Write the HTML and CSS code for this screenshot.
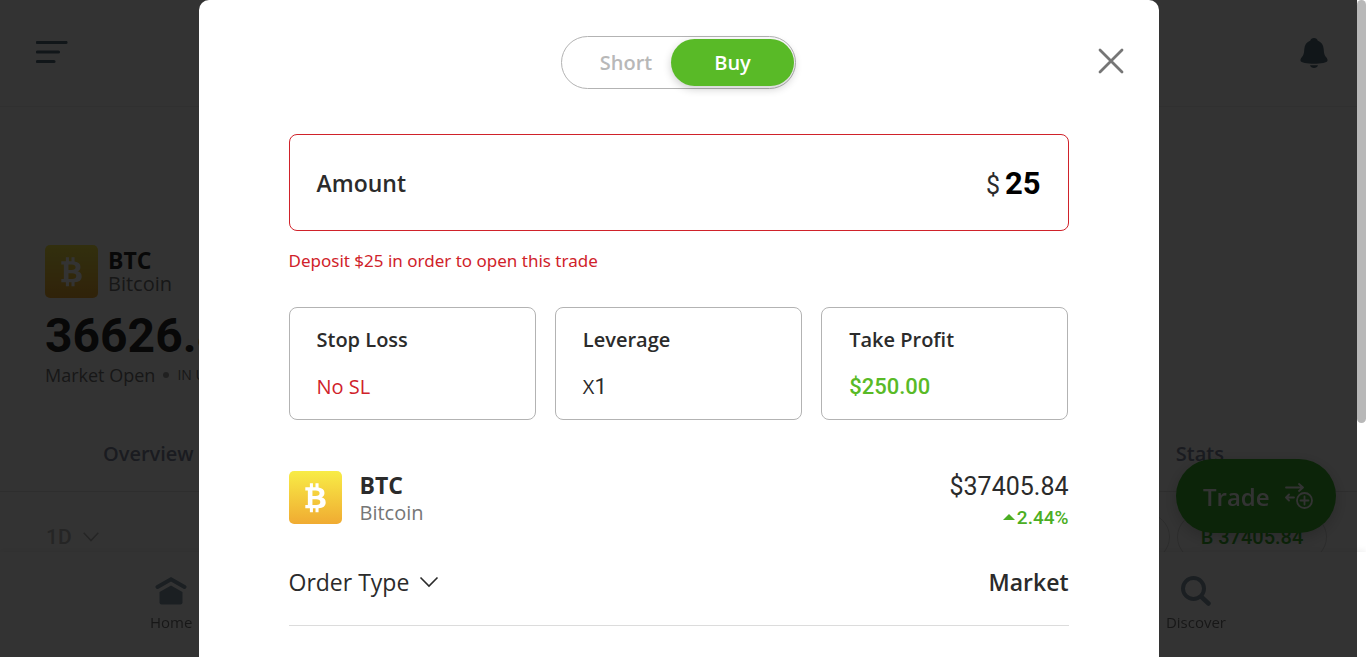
FILE: index.html
```html
<!DOCTYPE html>
<html lang="en">
<head>
<meta charset="utf-8">
<meta name="viewport" content="width=device-width, initial-scale=1">
<title>BTC - Trade</title>
<link rel="stylesheet" href="styles.css">
</head>
<body>

<div class="page">
	<header class="topbar">
		<button class="icon-btn" type="button" aria-label="Menu">
			<svg width="32" height="24" viewBox="0 0 32 24" fill="none" stroke="#556e7d" stroke-width="3.2" stroke-linecap="round"><path d="M1.500 1.500h28.500M1.500 11h21M1.500 20.500h16.500"/></svg>
		</button>
		<button class="icon-btn" type="button" aria-label="Notifications">
			<svg width="28" height="32" viewBox="0 0 28 32" fill="#556e7d"><path d="M14 1c2 0 3.400 1.200 3.600 2.600 3.900 1.500 5.800 4.600 6.100 8.500.3 4.500.8 6.200 2.500 8.100 1 1.200 1.500 2.200 1.300 3.500C27.200 25.700 21 26.700 14 26.700S.8 25.700.5 23.700c-.2-1.300.3-2.300 1.300-3.500 1.700-1.900 2.200-3.600 2.500-8.100.3-3.900 2.200-7 6.100-8.500C10.600 2.200 12 1 14 1z"/><path d="M10 28.300h8c-.5 1.900-2 2.700-4 2.700s-3.500-.8-4-2.700z"/></svg>
		</button>
	</header>

	<section class="instrument">
		<div class="instrument-head">
			<svg class="coin" viewBox="0 0 52 52"><use href="#btc"/></svg>
			<div>
				<div class="symbol">BTC</div>
				<div class="fullname">Bitcoin</div>
			</div>
		</div>
		<div class="price">36626.84</div>
		<div class="market-state">Market Open <i class="dot"></i> <small>IN USD</small></div>
	</section>

	<nav class="tabs">
		<a href="#">Overview</a>
		<a href="#">Stats</a>
	</nav>

	<div class="chart-bar">
		<button class="period" type="button">1D
			<svg width="16" height="10" viewBox="0 0 16 10" fill="none" stroke="currentColor" stroke-width="1.6"><path d="M.7.7 8 8.500 15.300.7"/></svg>
		</button>
		<div class="quotes">
			<span class="quote sell">S 36626.84</span>
			<span class="quote buy">B 37405.84</span>
		</div>
	</div>

	<nav class="bottom-nav">
		<a href="#">
			<svg width="32" height="30" viewBox="0 0 32 30"><path d="M2.500 11 16 3.200 29.500 11" fill="none" stroke="#879baa" stroke-width="4" stroke-linecap="round"/><path d="M16 9.500 27.500 16v10.500a2 2 0 0 1-2 2h-19a2 2 0 0 1-2-2V16z" fill="#879baa"/></svg>
			Home
		</a>
		<a href="#">
			<svg width="32" height="30" viewBox="0 0 32 30" fill="none" stroke="#879baa" stroke-linecap="round"><circle cx="13.500" cy="12.500" r="10.500" stroke-width="4"/><path d="m21.500 21 7 6.500" stroke-width="4.500"/></svg>
			Discover
		</a>
	</nav>

	<button class="trade-btn" type="button">Trade
		<svg width="28" height="26" viewBox="0 0 28 26" fill="none" stroke="#fff" stroke-width="1.800" stroke-linecap="round" stroke-linejoin="round"><path d="M1 4.500h16M14 1l4 3.500L14 8M9 14.500H1M4 11.500l-3 3 3 3"/><circle cx="19.500" cy="17.500" r="7.500"/><path d="M19.500 13.500v8M15.500 17.500h8"/></svg>
	</button>
</div>

<div class="overlay">
	<form class="modal">
		<button class="close" type="button" aria-label="Close">
			<svg width="26" height="26" viewBox="0 0 26 26" fill="none" stroke="#767676" stroke-width="2.800" stroke-linecap="round"><path d="m2 2 22 22M24 2 2 24"/></svg>
		</button>

		<div class="side-switch">
			<button class="side" type="button">Short</button>
			<button class="side side-active" type="button">Buy</button>
		</div>

		<div class="amount-box">
			<label for="amount">Amount</label>
			<div class="amount-value">
				<span>$</span>
				<input id="amount" type="text" inputmode="numeric" value="25">
			</div>
		</div>
		<p class="error">Deposit $25 in order to open this trade</p>

		<div class="params">
			<button class="param" type="button">
				<span class="param-name">Stop Loss</span>
				<span class="param-value red">No SL</span>
			</button>
			<button class="param" type="button">
				<span class="param-name">Leverage</span>
				<span class="param-value">X<span class="num">1</span></span>
			</button>
			<button class="param" type="button">
				<span class="param-name">Take Profit</span>
				<span class="param-value green">$250.00</span>
			</button>
		</div>

		<div class="asset">
			<svg class="coin" viewBox="0 0 52 52">
				<defs>
					<linearGradient id="gold" x1="0" y1="0" x2="0" y2="1">
						<stop offset="0" stop-color="#f8ec46"/>
						<stop offset="1" stop-color="#f0ab32"/>
					</linearGradient>
					<g id="btc">
						<rect width="52" height="52" rx="5" fill="url(#gold)"/>
						<path fill="#fff" fill-rule="evenodd" d="M16 16h4.500v-4h3v4h2.500v-4h3v4.300c3.700.5 5.800 2.300 5.800 5.200 0 2-1 3.500-2.900 4.300 2.600.7 4.100 2.400 4.100 5 0 3.500-2.500 5.400-7 5.700v4h-3v-4h-2.500v4h-3v-4H16v-3.200h2.500V19.200H16zM23 19.200v5.400h3.200c2.500 0 3.800-.9 3.800-2.700s-1.300-2.700-3.800-2.700zM23 27.700v5.600h3.700c2.700 0 4-.9 4-2.800s-1.300-2.800-4-2.800z"/>
					</g>
				</defs>
				<use href="#btc"/>
			</svg>
			<div class="asset-name">
				<div class="symbol">BTC</div>
				<div class="fullname">Bitcoin</div>
			</div>
			<div class="asset-rate">
				<div class="rate">$37405.84</div>
				<div class="change"><i class="up"></i>2.44%</div>
			</div>
		</div>

		<div class="order-type">
			<button class="order-btn" type="button">Order Type
				<svg width="20" height="12" viewBox="0 0 20 12" fill="none" stroke="currentColor" stroke-width="1.600"><path d="M1.500 1.500 10 10l8.500-8.500"/></svg>
			</button>
			<strong>Market</strong>
		</div>
	</form>
</div>

<div class="scroll-thumb"></div>

</body>
</html>
```
FILE: styles.css
```css
* {
	box-sizing: border-box;
}
body {
	margin: 0;
	background: #fff;
	color: #2b2b2b;
	font-family: "Open Sans", "Noto Sans", sans-serif;
	overflow: hidden;
}
button {
	padding: 0;
	border: 0;
	background: none;
	color: inherit;
	font: inherit;
	cursor: pointer;
}
a {
	color: inherit;
	text-decoration: none;
}
svg {
	display: block;
	flex: none;
}
.coin {
	width: 53px;
	height: 53px;
}
.symbol {
	font-size: 23px;
	font-weight: 700;
}
.fullname {
	color: #767676;
	font-size: 20px;
}

/* page behind the dialog */
.page {
	padding-right: 9px;
}
.topbar {
	display: flex;
	justify-content: space-between;
	align-items: center;
	height: 107px;
	padding: 0 29px 0 36px;
	border-bottom: 1px solid #f0f0f0;
}
.instrument {
	padding: 138px 45px 0;
}
.instrument-head {
	display: flex;
	gap: 10px;
	line-height: 24px;
}
.instrument-head .symbol {
	margin-top: 3px;
}
.price {
	margin-top: 10px;
	font-family: Roboto, sans-serif;
	font-size: 48px;
	font-weight: 700;
	line-height: 56px;
}
.market-state {
	display: flex;
	align-items: center;
	gap: 8px;
	color: #767676;
	font-size: 18px;
	line-height: 22px;
}
.market-state small {
	font-size: 14px;
}
.dot {
	width: 6px;
	height: 6px;
	border-radius: 50%;
	background: #a0a0a0;
}
.tabs {
	display: flex;
	justify-content: space-between;
	margin-top: 30px;
	padding: 24px 133px 23px 103px;
	border-bottom: 1px solid #e4e4e4;
	color: #8289a0;
	font-size: 20px;
	font-weight: 600;
	line-height: 28px;
}
.chart-bar {
	display: flex;
	justify-content: space-between;
	align-items: center;
	padding: 21px 30px 0 46px;
}
.period {
	display: flex;
	align-items: center;
	gap: 11px;
	color: #b8b8b8;
	font-family: Roboto, sans-serif;
	font-size: 21px;
	font-weight: 500;
}
.quotes {
	display: flex;
	gap: 7px;
}
.quote {
	width: 150px;
	border: 1px solid #dcdcdc;
	border-radius: 24px;
	font-family: Roboto, sans-serif;
	font-size: 20px;
	font-weight: 500;
	line-height: 46px;
	text-align: center;
}
.sell {
	color: #d0222a;
}
.buy {
	color: #3cb42d;
}
.bottom-nav {
	position: fixed;
	right: 0;
	bottom: 0;
	left: 0;
	display: flex;
	justify-content: space-between;
	padding: 24px 140px 24px 150px;
	background: #fff;
	box-shadow: 0 -2px 6px rgba(0, 0, 0, 0.06);
	color: #767676;
	font-size: 15px;
	line-height: 22px;
}
.bottom-nav a {
	display: flex;
	flex-direction: column;
	align-items: center;
	gap: 5px;
}
.trade-btn {
	position: fixed;
	right: 30px;
	bottom: 124px;
	display: flex;
	align-items: center;
	gap: 15px;
	width: 160px;
	height: 74px;
	padding-left: 27px;
	border-radius: 37px;
	background: #3cb42d;
	box-shadow: 0 4px 16px rgba(0, 0, 0, 0.2);
	color: #fff;
	font-size: 24px;
	font-weight: 600;
}

/* dialog */
.overlay {
	position: fixed;
	top: 0;
	right: 9px;
	bottom: 0;
	left: 0;
	overflow: hidden;
	background: rgba(0, 0, 0, 0.8);
}
.modal {
	position: relative;
	max-width: 960px;
	min-height: 100%;
	margin: 0 auto;
	padding: 36px 90px;
	border-radius: 10px 10px 0 0;
	background: #fff;
}
.close {
	position: absolute;
	top: 48px;
	right: 35px;
}
.side-switch {
	display: flex;
	width: 235px;
	margin: 0 auto;
	padding: 2px 1px;
	border: 1px solid #b3b3b3;
	border-radius: 27px;
	font-size: 20px;
	font-weight: 600;
	line-height: 47px;
}
.side {
	flex: 1;
	padding-left: 18px;
	color: #b8b8b8;
}
.side-active {
	flex: none;
	width: 123px;
	padding: 0;
	border-radius: 24px;
	background: #59ba27;
	box-shadow: 0 3px 8px rgba(0, 0, 0, 0.2);
	color: #fff;
}
.amount-box {
	display: flex;
	justify-content: space-between;
	align-items: center;
	height: 97px;
	margin-top: 45px;
	padding: 0 27px;
	border: 1px solid #d0222a;
	border-radius: 8px;
	font-size: 23px;
	font-weight: 600;
}
.amount-value {
	display: flex;
	align-items: baseline;
	gap: 5px;
	font-family: Roboto, sans-serif;
	font-size: 25px;
	font-weight: 400;
}
.amount-value input {
	width: 2ch;
	padding: 2px 0 0;
	border: 0;
	outline: 0;
	background: none;
	color: #000;
	font-family: inherit;
	font-size: 31px;
	font-weight: 700;
	text-align: right;
}
.error {
	margin: 18px 0 0;
	color: #d0222a;
	font-family: "Noto Sans", sans-serif;
	font-size: 17px;
	line-height: 24px;
}
.params {
	display: grid;
	grid-template-columns: repeat(3, 1fr);
	gap: 19px;
	margin-top: 34px;
}
.param {
	display: flex;
	flex-direction: column;
	gap: 19px;
	padding: 18px 27px;
	border: 1px solid #b3b3b3;
	border-radius: 8px;
	line-height: 28px;
	text-align: left;
}
.param-name {
	font-size: 20px;
	font-weight: 600;
}
.param-value {
	font-size: 20px;
}
.num {
	font-family: Roboto, sans-serif;
	font-size: 22px;
}
.red {
	color: #d0222a;
}
.green {
	color: #59ba27;
	font-family: Roboto, sans-serif;
	font-size: 22px;
	font-weight: 500;
}
.asset {
	display: flex;
	align-items: flex-start;
	margin-top: 51px;
}
.asset-name {
	flex: 1;
	margin-left: 18px;
	line-height: 28px;
}
.asset-rate {
	font-family: Roboto, sans-serif;
	line-height: 31px;
	text-align: right;
}
.rate {
	font-size: 25px;
}
.change {
	color: #4bae23;
	font-size: 19px;
	font-weight: 500;
}
.up {
	display: inline-block;
	margin-right: 2px;
	border: 6px solid transparent;
	border-top: 0;
	border-bottom-color: currentColor;
	vertical-align: 4px;
}
.order-type {
	display: flex;
	justify-content: space-between;
	margin-top: 32px;
	padding-bottom: 26px;
	border-bottom: 1px solid #dcdcdc;
	font-size: 23px;
	line-height: 34px;
}
.order-type strong {
	font-weight: 600;
}
.order-btn {
	display: flex;
	align-items: center;
	gap: 10px;
}
.scroll-thumb {
	position: fixed;
	top: 0;
	right: 0;
	width: 9px;
	height: 423px;
	border-radius: 5px;
	background: #b8b8b8;
}
```
